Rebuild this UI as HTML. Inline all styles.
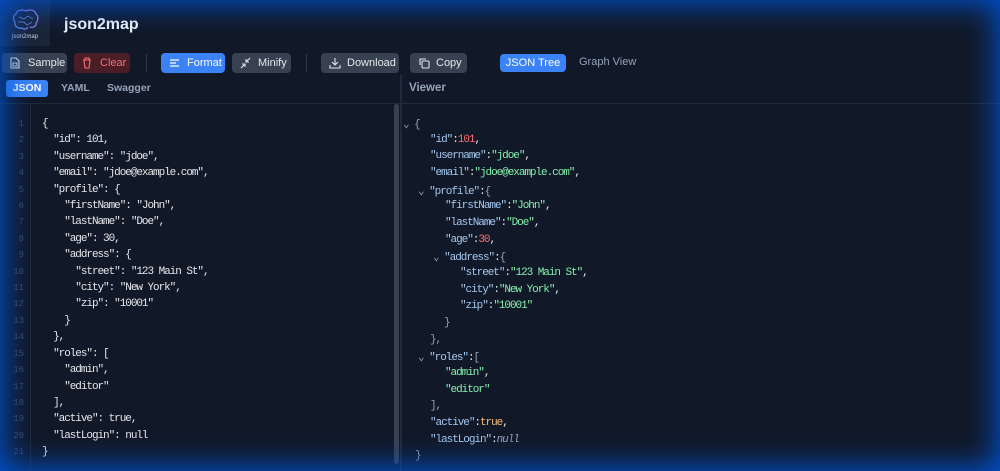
<!DOCTYPE html>
<html><head><meta charset="utf-8">
<style>
*{box-sizing:border-box;margin:0;padding:0}
html,body{width:1000px;height:471px;overflow:hidden;background:#111827;font-family:"Liberation Sans",sans-serif;color:#e5e7eb}
.glow{position:absolute;inset:0;box-shadow:inset 0 0 30px 4px #0052d0;pointer-events:none;z-index:10}
.logo{position:absolute;left:0;top:0;width:50px;height:46px;background:#1b2537;}
.logo .t{position:absolute;left:0;width:50px;top:34px;text-align:center;font-size:6px;color:#cbd5e1}
.title{position:absolute;left:64px;top:16px;font-size:16px;font-weight:bold;color:#f1f5f9}
.btn{position:absolute;top:53px;height:20px;border-radius:4px;font-size:11px;line-height:20px;color:#e5e7eb;background:#374151;padding-left:26px}
.btn svg{position:absolute;left:8px;top:4px}
.sep{position:absolute;top:54px;width:1px;height:18px;background:#2d3748}
.tab{position:absolute;top:80px;height:17px;font-size:10.5px;font-weight:bold;line-height:17px;color:#94a3b8}
.code{position:absolute;font-family:"Liberation Mono",monospace;font-size:11px;letter-spacing:-1.05px;white-space:pre;color:#e5e7eb}
.ln{position:absolute;left:0;width:24px;text-align:right;white-space:pre;font-family:"Liberation Mono",monospace;font-size:9px;color:#3f4c63;line-height:16.4px;top:116px}
.t2 div{position:absolute;height:16px}
.k{color:#a5c8f0}.s{color:#86efac}.n{color:#f87171}.b{color:#fdba74}.p{color:#94a3b8}
</style></head><body>
<div class="logo"><svg width="30" height="26" viewBox="0 0 30 26" style="position:absolute;left:11px;top:8px"><path d="M15 3C11 1 6 2 5 6 2 7 2 12 4 14 3 18 7 21 11 20 13 22 16 21 17 19" fill="none" stroke="#6d8cf5" stroke-width="1.2"/><path d="M15 3C19 1 24 2 25 6 28 8 27 13 25 15 26 18 22 20 19 19" fill="none" stroke="#a77cf0" stroke-width="1.2"/><path d="M8 9l5 2 4-3 5 3M7 14l6 0 3 3 5-3" stroke="#7c9cf7" stroke-width=".7" fill="none"/></svg><div class="t">json2map</div></div>
<div class="title">json2map</div>

<div class="btn" style="left:2px;width:65px">Sample<svg width="10" height="12" viewBox="0 0 10 12"><path d="M1 1h5l3 3v7H1z" fill="none" stroke="#e5e7eb" stroke-width="1.1"/><rect x="3" y="6" width="4" height="3" fill="none" stroke="#e5e7eb" stroke-width=".9"/></svg></div>
<div class="btn" style="left:74px;width:56px;background:#4a1d27;color:#f87171">Clear<svg width="10" height="12" viewBox="0 0 10 12"><path d="M1 3h8M3 3V1h4v2M2 3l1 8h4l1-8" fill="none" stroke="#f87171" stroke-width="1.1"/></svg></div>
<div class="sep" style="left:146px"></div>
<div class="btn" style="left:161px;width:64px;background:#3b82f6;color:#fff">Format<svg width="11" height="12" viewBox="0 0 11 12"><path d="M1 3h9M1 6h6M1 9h9" stroke="#fff" stroke-width="1.2"/></svg></div>
<div class="btn" style="left:232px;width:59px">Minify<svg width="11" height="12" viewBox="0 0 11 12"><path d="M1 11l4-4M2 7h3v3M10 1L6 5M6 2v3h3" fill="none" stroke="#e5e7eb" stroke-width="1.1"/></svg></div>
<div class="sep" style="left:306px"></div>
<div class="btn" style="left:321px;width:78px">Download<svg width="12" height="12" viewBox="0 0 12 12"><path d="M6 1v6M3 5l3 3 3-3M1 8v3h10V8" fill="none" stroke="#e5e7eb" stroke-width="1.1"/></svg></div>
<div class="btn" style="left:410px;width:57px">Copy<svg width="12" height="12" viewBox="0 0 12 12"><rect x="4" y="4" width="7" height="7" rx="1" fill="none" stroke="#e5e7eb" stroke-width="1.1"/><path d="M2 8V2h6" fill="none" stroke="#e5e7eb" stroke-width="1.1"/></svg></div>
<div class="btn" style="left:500px;top:54px;height:18px;line-height:18px;width:66px;padding-left:0;text-align:center;background:#3b82f6;color:#fff">JSON Tree</div>
<div style="position:absolute;left:579px;top:56px;font-size:11px;color:#94a3b8">Graph View</div>

<div class="tab" style="left:6px;width:42px;background:#3b82f6;color:#fff;text-align:center;border-radius:3px">JSON</div>
<div class="tab" style="left:61px">YAML</div>
<div class="tab" style="left:107px">Swagger</div>

<div style="position:absolute;left:0;top:103px;width:1000px;height:1px;background:#1f2a3a"></div>
<div style="position:absolute;left:30px;top:104px;width:1px;height:367px;background:#1f2a3a"></div>
<div style="position:absolute;left:394px;top:104px;width:5px;height:360px;background:#374151;border-radius:3px"></div>
<div style="position:absolute;left:400px;top:75px;width:2px;height:396px;background:#1f2a3a"></div>
<div style="position:absolute;left:409px;top:82px;font-size:11.5px;font-weight:bold;color:#94a3b8">Viewer</div>

<div class="ln">1
2
3
4
5
6
7
8
9
10
11
12
13
14
15
16
17
18
19
20
21</div>
<div class="code" style="left:42px;top:116px;line-height:16.4px">{
  "id": 101,
  "username": "jdoe",
  "email": "jdoe@example.com",
  "profile": {
    "firstName": "John",
    "lastName": "Doe",
    "age": 30,
    "address": {
      "street": "123 Main St",
      "city": "New York",
      "zip": "10001"
    }
  },
  "roles": [
    "admin",
    "editor"
  ],
  "active": true,
  "lastLogin": null
}</div>

<div class="code t2" style="left:0;top:0">
<div style="left:403px;top:117px"><span class="p">⌄ {</span></div>
<div style="left:430px;top:134px"><span class="k">"id"</span>:<span class="n">101</span>,</div>
<div style="left:430px;top:150px"><span class="k">"username"</span>:<span class="s">"jdoe"</span>,</div>
<div style="left:430px;top:167px"><span class="k">"email"</span>:<span class="s">"jdoe@example.com"</span>,</div>
<div style="left:418px;top:184px"><span class="p">⌄ </span><span class="k">"profile"</span>:<span class="p">{</span></div>
<div style="left:445px;top:200px"><span class="k">"firstName"</span>:<span class="s">"John"</span>,</div>
<div style="left:445px;top:217px"><span class="k">"lastName"</span>:<span class="s">"Doe"</span>,</div>
<div style="left:445px;top:234px"><span class="k">"age"</span>:<span class="n">30</span>,</div>
<div style="left:433px;top:250px"><span class="p">⌄ </span><span class="k">"address"</span>:<span class="p">{</span></div>
<div style="left:460px;top:267px"><span class="k">"street"</span>:<span class="s">"123 Main St"</span>,</div>
<div style="left:460px;top:284px"><span class="k">"city"</span>:<span class="s">"New York"</span>,</div>
<div style="left:460px;top:300px"><span class="k">"zip"</span>:<span class="s">"10001"</span></div>
<div style="left:444px;top:317px"><span class="p">}</span></div>
<div style="left:430px;top:334px"><span class="p">},</span></div>
<div style="left:418px;top:350px"><span class="p">⌄ </span><span class="k">"roles"</span>:<span class="p">[</span></div>
<div style="left:445px;top:367px"><span class="s">"admin"</span>,</div>
<div style="left:445px;top:384px"><span class="s">"editor"</span></div>
<div style="left:430px;top:400px"><span class="p">],</span></div>
<div style="left:430px;top:417px"><span class="k">"active"</span>:<span class="b">true</span>,</div>
<div style="left:430px;top:434px"><span class="k">"lastLogin"</span>:<span class="p"><i>null</i></span></div>
<div style="left:415px;top:450px"><span class="p">}</span></div>
</div>
<div class="glow"></div>
</body></html>
